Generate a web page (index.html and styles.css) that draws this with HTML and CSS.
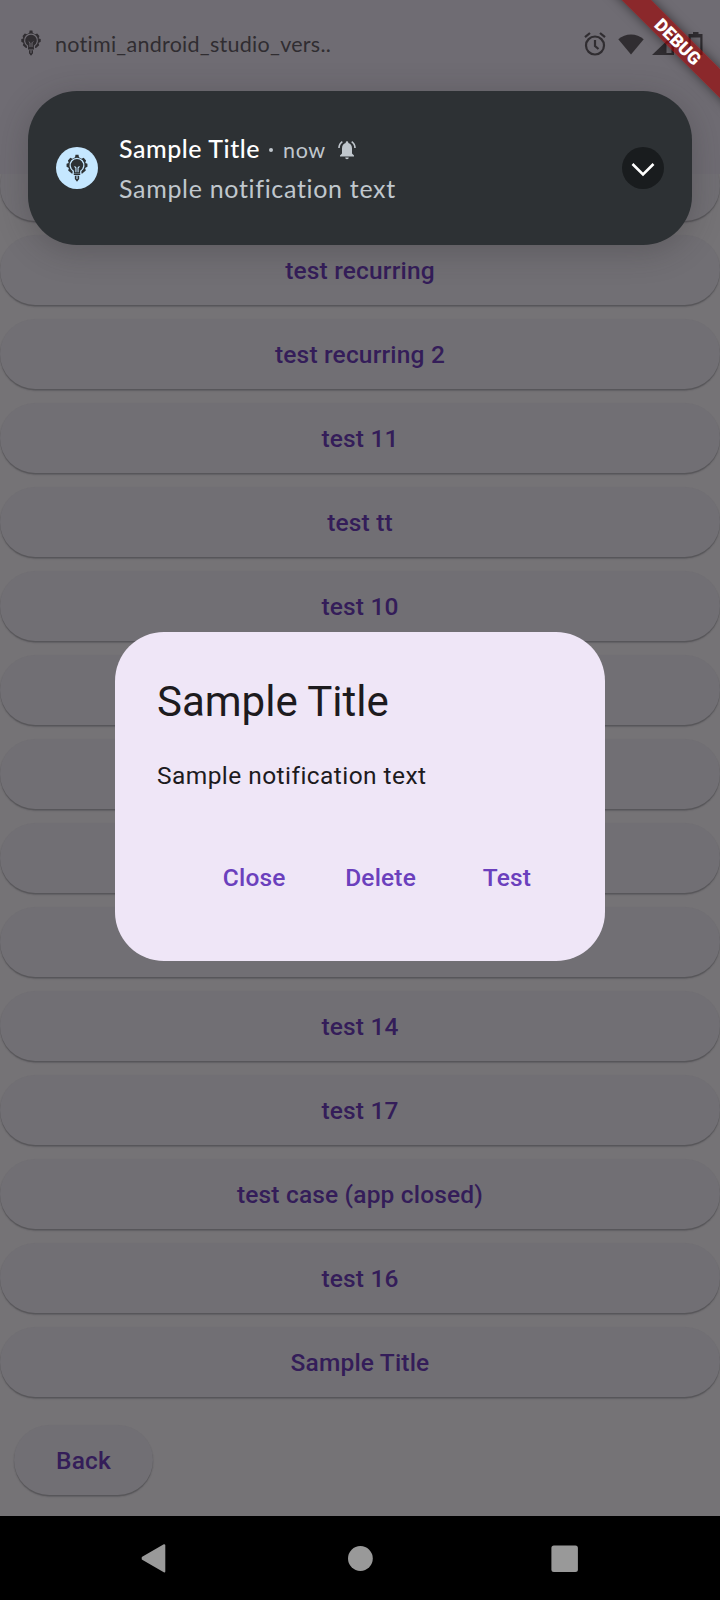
FILE: index.html
```html
<!DOCTYPE html>
<html lang="en">
<head>
<meta charset="utf-8">
<title>Notimi</title>
<link rel="stylesheet" href="styles.css">
</head>
<body>
<svg class="defs" aria-hidden="true">
  <symbol id="bulb" viewBox="0 0 20 26">
    <path d="M5 18 3.500 16.800 1.800 15.300 2.500 13 .3 11.800V9l2-.6L1.600 6l2.200-2.500 2 .8L8.200 3 8.600.6h2.800l.4 2.400 2.400 1.300 2-.8L18.400 6l-.7 2.400 2 .6v2.800L17.500 13l.7 2.300-1.700 1.500L15 18z" fill="currentColor"/>
    <path d="M6.500 15.800a6.400 6.400 0 1 1 7 0V19h-7z" class="bulb-ring"/>
    <path d="M10 5.500a4.700 4.700 0 0 0-3 8.400c.8.800 1 1.800 1 3.100h4c0-1.300.2-2.300 1-3.100a4.700 4.700 0 0 0-3-8.400z" fill="currentColor"/>
    <path d="m7.700 11.500 1.300 1.300V17m3.300-5.500L11 12.800V17" class="bulb-wire"/>
    <path d="M7 18h6v1.600H7zm1 2.200h4v3L10 25.800l-2-2.600z" fill="currentColor"/>
    <path d="M10 20.200v3" class="bulb-wire"/>
  </symbol>
</svg>
<main class="screen">
  <header class="app-bar"></header>
  <section class="list">
    <div class="row"></div>
    <div class="row"><span>test recurring</span></div>
    <div class="row"><span>test recurring 2</span></div>
    <div class="row"><span>test 11</span></div>
    <div class="row"><span>test tt</span></div>
    <div class="row"><span>test 10</span></div>
    <div class="row"></div>
    <div class="row"></div>
    <div class="row"></div>
    <div class="row"></div>
    <div class="row"><span>test 14</span></div>
    <div class="row"><span>test 17</span></div>
    <div class="row"><span>test case (app closed)</span></div>
    <div class="row"><span>test 16</span></div>
    <div class="row"><span>Sample Title</span></div>
  </section>
  <div class="footer"><div class="back">Back</div></div>
  <nav class="nav">
    <svg viewBox="0 0 30 30"><path d="M1.700 14.700 23.300 2.200v26.300L1.700 16z" fill="#999" stroke="#999" stroke-width="2" stroke-linejoin="round"/></svg>
    <svg viewBox="0 0 30 30"><circle cx="15.400" cy="15.500" r="12.400" fill="#999"/></svg>
    <svg viewBox="0 0 30 30"><rect x="2.400" y="2.400" width="26.500" height="26.500" rx="2.500" fill="#999"/></svg>
  </nav>

  <div class="status">
    <svg class="status-logo"><use href="#bulb"/></svg>
    <span class="status-app">notimi_android_studio_vers..</span>
    <svg class="status-icons" viewBox="0 0 120 26">
      <g fill="none" stroke="#302d31" stroke-width="2.200">
        <circle cx="11" cy="14.500" r="9"/>
        <path d="M11 9v6l3.500 3M1 6.200 6 2M16 2l5 4.200"/>
      </g>
      <g fill="#302d31">
        <path d="M47 23.500 34.300 8.200a19.500 19.500 0 0 1 25.400 0z"/>
        <path fill-rule="evenodd" d="M90 3v21H68zm-7.500 9.500v9.500h5V12.500z"/>
        <path fill-rule="evenodd" d="M109 3V1h5.500v2h4v21H104.500V3zM106.700 6.500V21.500h9.600V6.500z"/>
      </g>
    </svg>
  </div>

  <div class="banner">DEBUG</div>

  <article class="notice">
    <div class="notice-logo"><svg><use href="#bulb"/></svg></div>
    <div class="notice-copy">
      <div class="notice-head">
        <b>Sample Title</b><i></i><span>now</span>
        <svg viewBox="0 0 18 20"><path d="M9 1.200a1.300 1.300 0 0 1 1.300 1.300v.6C12.800 3.700 14 5.800 14 8.500v5l2 2v1H2v-1l2-2v-5c0-2.700 1.200-4.800 3.700-5.400v-.6A1.300 1.300 0 0 1 9 1.200zM7.200 17.500h3.600a1.800 1.800 0 0 1-3.600 0z" fill="#c0c7cd"/><path d="M1 8c0-2.700 1.300-5 3.300-6.400M17 8c0-2.700-1.300-5-3.300-6.400" fill="none" stroke="#c0c7cd" stroke-width="1.600"/></svg>
      </div>
      <p>Sample notification text</p>
    </div>
    <div class="expand"><svg viewBox="0 0 42 42"><path d="m10.500 17 10.500 10.500L31.500 17" fill="none" stroke="#fff" stroke-width="2.600"/></svg></div>
  </article>

  <div class="dialog">
    <h1>Sample Title</h1>
    <p>Sample notification text</p>
    <div class="actions"><span>Close</span><span>Delete</span><span>Test</span></div>
  </div>
</main>
</body>
</html>
```
FILE: styles.css
```css
* { box-sizing: border-box; }
body { margin: 0; background: #757376; font-family: Roboto, sans-serif; }
.defs { position: absolute; width: 0; height: 0; }
.screen {
  position: relative;
  display: flex;
  flex-direction: column;
  width: 720px;
  height: 1600px;
  overflow: hidden;
}
.app-bar { flex: none; height: 174px; background: #6f6c73; }
.list {
  flex: none;
  display: flex;
  flex-direction: column;
  justify-content: flex-end;
  height: 1230px;
  overflow: hidden;
}
.row, .back {
  flex: none;
  display: flex;
  align-items: center;
  justify-content: center;
  height: 70px;
  border-radius: 35px;
  background: #716f74;
  box-shadow: 0 1.500px 1px rgba(50, 48, 52, .35), 0 1.500px 2px rgba(50, 48, 52, .15);
  color: #341d59;
  font-size: 24.500px;
  font-weight: 500;
  letter-spacing: .175px;
}
.row { margin: 7px 0; }
.footer { flex: none; height: 112px; padding: 21px 14px; }
.back { width: 139px; }
.nav {
  flex: 1;
  display: flex;
  align-items: center;
  justify-content: center;
  gap: 174px;
  background: #000;
}
.nav svg { width: 30px; height: 30px; }

.banner {
  position: absolute;
  left: 578px;
  top: 30.500px;
  width: 200px;
  height: 21px;
  transform: rotate(45deg);
  background: rgba(155, 2, 3, .64);
  box-shadow: 0 0 11px rgba(0, 0, 0, .5);
  color: #fff;
  font-size: 17.850px;
  font-weight: 900;
  line-height: 21px;
  text-align: center;
}
.status {
  position: absolute;
  inset: 0 0 auto;
  display: flex;
  align-items: center;
  height: 88px;
  padding: 0 16px 0 20px;
  color: #302d31;
}
.status-logo { width: 22px; height: 26px; margin-bottom: 2px; --gap: #6f6c73; }
.status-app {
  margin-left: 13px;
  font: 21.500px/30px Lato, sans-serif;
  letter-spacing: .27px;
}
.status-icons { width: 120px; height: 26px; margin-left: auto; }
.bulb-ring { fill: none; stroke: var(--gap); stroke-width: 1.200px; }
.bulb-wire { fill: none; stroke: var(--gap); stroke-width: 1px; }

.notice {
  position: absolute;
  left: 28px;
  top: 91px;
  display: flex;
  align-items: center;
  width: 664px;
  height: 154px;
  padding: 0 28px;
  border-radius: 49px;
  background: #2d3134;
  box-shadow: 0 6px 32px rgba(45, 42, 45, .3);
  font-family: Lato, sans-serif;
}
.notice-logo {
  display: grid;
  place-items: center;
  width: 42px;
  height: 42px;
  border-radius: 50%;
  background: #c5e7ff;
  color: #2d3134;
  --gap: #c5e7ff;
}
.notice-logo svg { width: 22px; height: 28px; }
.notice-copy {
  flex: 1;
  margin-left: 21px;
  color: #c0c7cd;
  font-size: 25px;
  font-variant-ligatures: none;
  letter-spacing: .55px;
}
.notice-head { display: flex; align-items: center; height: 40px; }
.notice-head b { margin-top: -1px; color: #fff; font-weight: 500; }
.notice-head i { width: 4px; height: 4px; margin: 4px 10px 0 9px; border-radius: 50%; background: #c0c7cd; }
.notice-head span { padding-top: 3px; font-size: 21.500px; }
.notice-head svg { width: 18px; height: 20px; margin: 3px 0 0 12px; }
.notice-copy p { margin: 0; line-height: 40px; letter-spacing: .68px; }
.expand { width: 42px; height: 42px; border-radius: 50%; background: #191c1e; }
.expand svg { display: block; }

.dialog {
  position: absolute;
  left: 115px;
  top: 632px;
  width: 490px;
  height: 329px;
  padding: 42px;
  border-radius: 49px;
  background: #efe6f7;
  color: #1d1b1e;
}
.dialog h1 { margin: 0; font-size: 42px; font-weight: 400; line-height: 56px; }
.dialog p { margin: 28px 0 0; font-size: 24.500px; line-height: 35px; letter-spacing: .4375px; }
.actions {
  display: flex;
  justify-content: flex-end;
  gap: 14px;
  margin-top: 43px;
  color: #6b40bd;
  font-size: 24.500px;
  font-weight: 500;
  letter-spacing: .175px;
}
.actions span { min-width: 112px; padding: 0 21px; line-height: 84px; text-align: center; }
```
